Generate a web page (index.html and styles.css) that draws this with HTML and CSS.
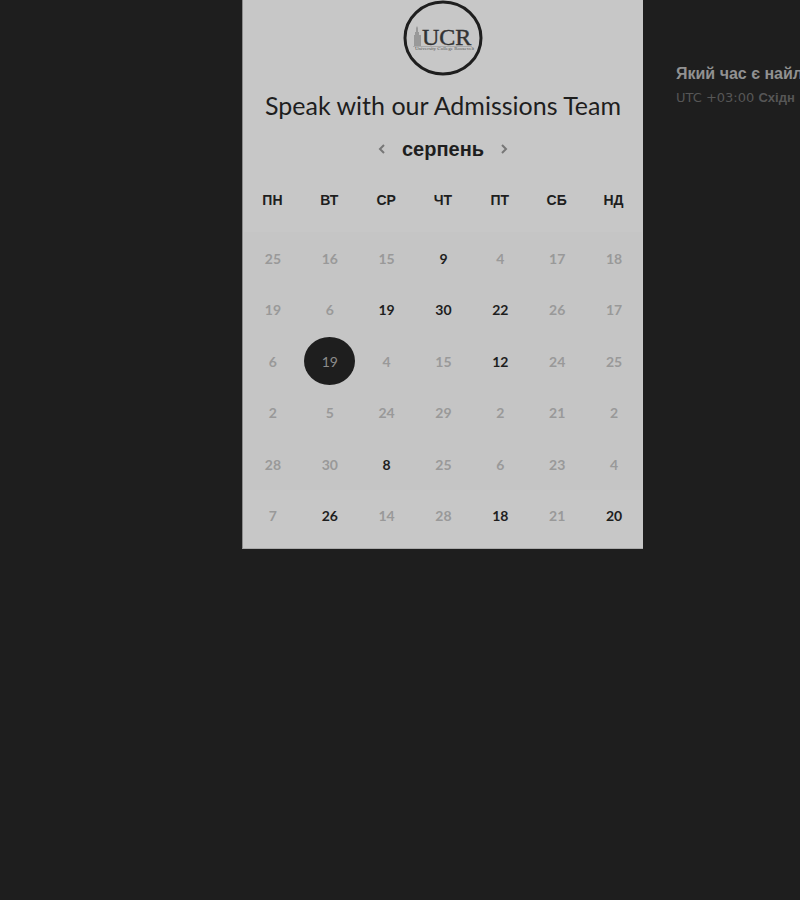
FILE: index.html
```html
<!DOCTYPE html>
<html lang="uk">
<head>
<meta charset="utf-8">
<meta name="viewport" content="width=device-width, initial-scale=1">
<title>Speak with our Admissions Team</title>
<link rel="stylesheet" href="styles.css">
</head>
<body>
<main class="scheduler">
  <section class="card">
    <svg class="logo" viewBox="0 0 80 76" role="img" aria-label="UCR">
      <ellipse class="logo-ring" cx="40" cy="38" rx="38" ry="36"/>
      <path class="logo-tower" d="M11 46V35h1v-3h1v-4l1-2 1 2v4h1v3h2v11z"/>
      <path class="logo-rule" d="M10 46.5h59"/>
      <text class="logo-name" x="19" y="45">UCR</text>
      <text class="logo-sub" x="12" y="50">University College Roosevelt</text>
    </svg>
    <h1 class="title">Speak with our Admissions Team</h1>
    <div class="month">
      <button class="arrow" type="button" aria-label="Назад"><svg viewBox="0 0 8 12"><path d="M6 2 2 6l4 4"/></svg></button>
      <h2 class="month-name">серпень</h2>
      <button class="arrow" type="button" aria-label="Вперед"><svg viewBox="0 0 8 12"><path d="m2 2 4 4-4 4"/></svg></button>
    </div>
    <table class="calendar">
      <thead>
        <tr><th>ПН</th><th>ВТ</th><th>СР</th><th>ЧТ</th><th>ПТ</th><th>СБ</th><th>НД</th></tr>
      </thead>
      <tbody>
        <tr><td>25</td><td>16</td><td>15</td><td class="open">9</td><td>4</td><td>17</td><td>18</td></tr>
        <tr><td>19</td><td>6</td><td class="open">19</td><td class="open">30</td><td class="open">22</td><td>26</td><td>17</td></tr>
        <tr><td>6</td><td><button class="selected" type="button">19</button></td><td>4</td><td>15</td><td class="open">12</td><td>24</td><td>25</td></tr>
        <tr><td>2</td><td>5</td><td>24</td><td>29</td><td>2</td><td>21</td><td>2</td></tr>
        <tr><td>28</td><td>30</td><td class="open">8</td><td>25</td><td>6</td><td>23</td><td>4</td></tr>
        <tr><td>7</td><td class="open">26</td><td>14</td><td>28</td><td class="open">18</td><td>21</td><td class="open">20</td></tr>
      </tbody>
    </table>
  </section>
  <aside class="times">
    <h2 class="question">Який час є найл</h2>
    <p class="zone">UTC +03:00 <b>Східн</b></p>
  </aside>
</main>
</body>
</html>
```
FILE: styles.css
```css
* {
  box-sizing: border-box;
}

body {
  margin: 0;
  min-height: 100vh;
  background: #1e1e1e;
  color: #1e1e1e;
  font-family: Lato, "Liberation Sans", sans-serif;
  overflow-x: hidden;
}

.scheduler {
  display: grid;
  grid-template-columns: minmax(0, 242fr) 401px minmax(0, 157fr);
}

.card {
  grid-column: 2;
  padding: 0 1px 7px;
  background: #c7c7c7;
  border-left: 1px solid #8c8c8c;
  border-bottom: 1px solid #aaa;
}

.logo {
  display: block;
  width: 80px;
  height: 76px;
  margin: 0 auto;
}

.logo-ring {
  fill: none;
  stroke: #1e1e1e;
  stroke-width: 3;
}

.logo-tower {
  fill: #999;
}

.logo-rule {
  stroke: #aaa;
}

.logo-name {
  fill: #333;
  stroke: #333;
  stroke-width: 0.4px;
  font-family: "Liberation Serif", serif;
  font-size: 24px;
}

.logo-sub {
  fill: #555;
  font-family: "Liberation Serif", serif;
  font-size: 5px;
}

.title {
  margin: 13px 0 0;
  font-size: 25px;
  font-weight: 400;
  line-height: 32px;
  text-align: center;
  white-space: nowrap;
}

.month {
  display: flex;
  align-items: center;
  justify-content: center;
  gap: 16px;
  margin-top: 16px;
}

.month-name {
  margin: 0;
  font-family: "Liberation Sans", sans-serif;
  font-size: 20px;
  font-weight: 700;
  line-height: 24px;
}

.arrow {
  width: 8px;
  height: 12px;
  padding: 0;
  border: 0;
  background: none;
}

.arrow svg {
  display: block;
  fill: none;
  stroke: #777;
  stroke-width: 2;
}

.calendar {
  width: 100%;
  margin-top: 11px;
  border-collapse: collapse;
  table-layout: fixed;
}

th {
  height: 60px;
  padding: 0 0 4px;
  font-family: "Liberation Sans", sans-serif;
  font-size: 14px;
  font-weight: 700;
}

tbody {
  background: #c5c5c5;
}

td {
  height: 52px;
  padding: 0 0 0 1px;
  color: #999;
  font-size: 14px;
  font-weight: 700;
  text-align: center;
}

tr:nth-child(even) td {
  height: 51px;
}

tr:last-child td {
  background: #c7c7c7;
}

td.open {
  color: #1e1e1e;
}

.selected {
  display: block;
  width: 51px;
  height: 48px;
  margin: 0 auto;
  padding: 0;
  border: 0;
  border-radius: 50%;
  background: #1e1e1e;
  color: #8c8c8c;
  font: 400 14px Lato, sans-serif;
}

.times {
  padding: 62px 0 0 33px;
  white-space: nowrap;
  overflow: hidden;
}

.question {
  margin: 0;
  color: #919191;
  font-family: "Liberation Sans", sans-serif;
  font-size: 16px;
  font-weight: 700;
  line-height: 24px;
}

.zone {
  margin: 0;
  color: #565656;
  font-family: "DejaVu Sans", sans-serif;
  font-size: 13px;
  line-height: 24px;
}

.zone b {
  font-family: "Liberation Sans", sans-serif;
}
```
